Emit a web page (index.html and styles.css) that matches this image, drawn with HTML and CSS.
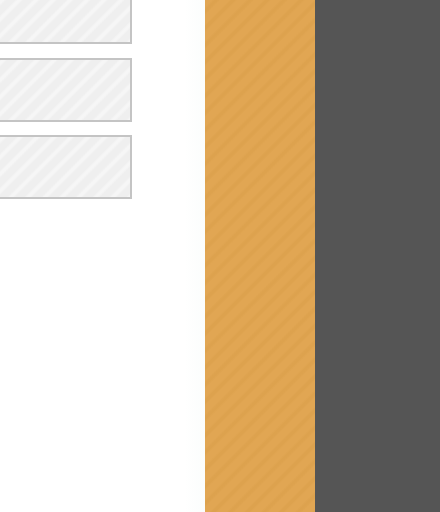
FILE: index.html
```html
<!DOCTYPE html>
<html>
<head>
<meta charset="utf-8">
<link rel="stylesheet" href="styles.css">
</head>
<body>
<div class="page">
  <div class="left">
    <div class="list">
      <div class="box"></div>
      <div class="box"></div>
      <div class="box"></div>
    </div>
  </div>
  <div class="accent"></div>
  <div class="dark"></div>
</div>
</body>
</html>
```

FILE: styles.css
```css
html, body {
  margin: 0;
  padding: 0;
  background: #ffffff;
  font-family: "Liberation Sans", Arial, sans-serif;
}
.page {
  display: flex;
  width: 440px;
  height: 512px;
  overflow: hidden;
}
.left {
  width: 205px;
  flex: none;
  background: linear-gradient(90deg, #ffffff 0%, #ffffff 90%, #fbfdfc 100%);
}
.list {
  display: flex;
  flex-direction: column;
  gap: 13.5px;
  margin-top: -20px;
  margin-left: -10px;
}
.box {
  width: 138px;
  height: 60px;
  border: 2px solid #c4c4c4;
  background-color: #f0f0f0;
  background-image: repeating-linear-gradient(135deg, #efefef 0px, #efefef 5px, #f6f6f6 7px, #f6f6f6 9px, #efefef 11px, #efefef 12px);
}
.accent {
  width: 110px;
  flex: none;
  background-color: #e0a552;
  background-image: repeating-linear-gradient(135deg, #e1a653 0px, #e1a653 5px, #dda24e 7px, #dda24e 9px, #e1a653 11px, #e1a653 12px);
}
.dark {
  flex: 1;
  background: #555555;
}
```
